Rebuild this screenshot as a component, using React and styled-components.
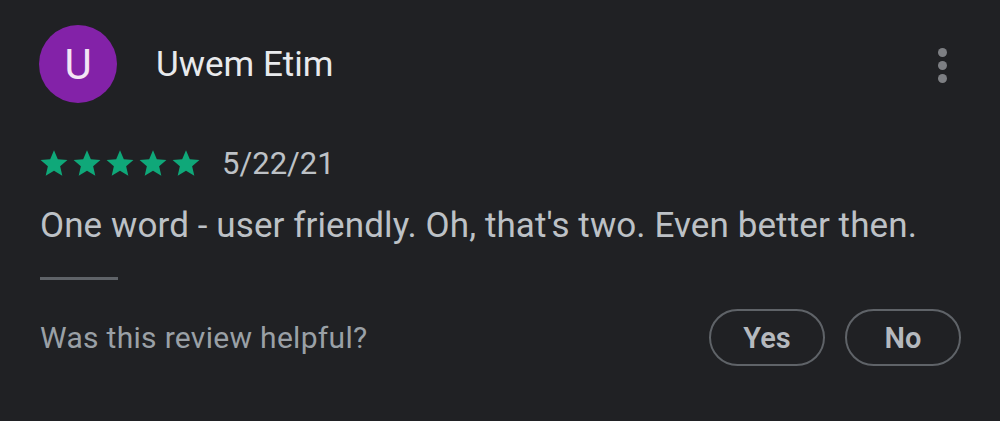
import React from 'react';
import styled, { createGlobalStyle } from 'styled-components';

const GlobalStyle = createGlobalStyle`
  html, body {
    margin: 0;
    padding: 0;
    background: #202124;
  }
  body {
    font-family: Roboto, "Liberation Sans", sans-serif;
  }
`;

function Star() {
  return (
    <svg width="32" height="30" viewBox="0 0 24 24">
      <path
        fill="#0fa879"
        d="M12 1.8l3.05 7.1 7.7.67-5.84 5.07 1.75 7.53L12 18.2l-6.66 3.97 1.75-7.53L1.25 9.57l7.7-.67z"
      />
    </svg>
  );
}

export default function App() {
  return (
    <>
      <GlobalStyle />
      <Card>
        <Header>
          <Avatar>U</Avatar>
          <Name>Uwem Etim</Name>
          <MoreButton aria-label="More">
            <Dot />
            <Dot />
            <Dot />
          </MoreButton>
        </Header>
        <RatingRow>
          <Stars>
            {[0, 1, 2, 3, 4].map((i) => (
              <Star key={i} />
            ))}
          </Stars>
          <DateText>5/22/21</DateText>
        </RatingRow>
        <ReviewText>One word - user friendly. Oh, that's two. Even better then.</ReviewText>
        <Divider />
        <Footer>
          <Question>Was this review helpful?</Question>
          <Actions>
            <PillButton>Yes</PillButton>
            <PillButton>No</PillButton>
          </Actions>
        </Footer>
      </Card>
    </>
  );
}

const Card = styled.div`
  width: 1000px;
  height: 421px;
  box-sizing: border-box;
  padding: 25px 39px 0 39px;
  background: #202124;
`;

const Header = styled.div`
  display: flex;
  align-items: center;
  height: 78px;
`;

const Avatar = styled.div`
  width: 78px;
  height: 78px;
  border-radius: 50%;
  background: #8322a8;
  color: #f3e5f5;
  font-size: 42px;
  display: flex;
  align-items: center;
  justify-content: center;
  flex-shrink: 0;
`;

const Name = styled.div`
  margin-left: 39px;
  font-size: 35px;
  color: #e8eaed;
  flex: 1;
`;

const MoreButton = styled.div`
  display: flex;
  flex-direction: column;
  align-items: center;
  gap: 4px;
  width: 20px;
  margin-right: 9px;
  margin-top: 2px;
`;

const Dot = styled.span`
  width: 9px;
  height: 9px;
  border-radius: 50%;
  background: #7d7f83;
`;

const RatingRow = styled.div`
  display: flex;
  align-items: center;
  margin-top: 44px;
  height: 32px;
`;

const Stars = styled.div`
  display: flex;
  gap: 1px;
  margin-left: -1px;
`;

const DateText = styled.div`
  margin-left: 20px;
  font-size: 31px;
  color: #bdc1c6;
`;

const ReviewText = styled.div`
  margin-top: 26px;
  font-size: 35px;
  letter-spacing: 0.1px;
  color: #bdc1c6;
  padding-left: 1px;
`;

const Divider = styled.div`
  width: 78px;
  height: 3px;
  background: #5f6368;
  margin-top: 31px;
  margin-left: 1px;
`;

const Footer = styled.div`
  display: flex;
  align-items: center;
  justify-content: space-between;
  margin-top: 29px;
`;

const Question = styled.div`
  font-size: 30px;
  letter-spacing: 0.3px;
  color: #9aa0a6;
  padding-left: 1px;
`;

const Actions = styled.div`
  display: flex;
  gap: 20px;
`;

const PillButton = styled.button`
  width: 116px;
  height: 57px;
  box-sizing: border-box;
  border: 2px solid #5f6368;
  border-radius: 29px;
  background: transparent;
  color: #b5b9be;
  font-family: Roboto, "Liberation Sans", sans-serif;
  font-weight: 600;
  font-size: 29px;
  padding: 0;
`;
